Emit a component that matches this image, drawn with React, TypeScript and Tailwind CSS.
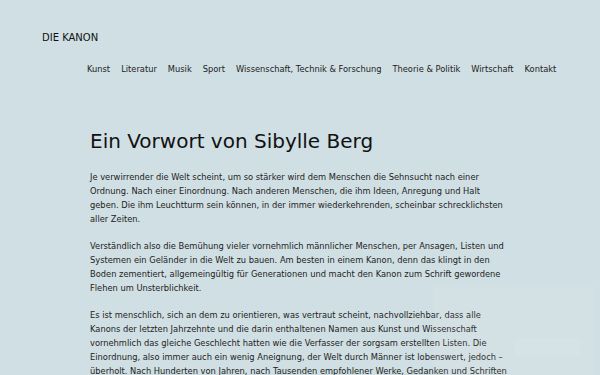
export default function App() {
  const nav = [
    "Kunst",
    "Literatur",
    "Musik",
    "Sport",
    "Wissenschaft, Technik & Forschung",
    "Theorie & Politik",
    "Wirtschaft",
    "Kontakt",
  ];

  return (
    <div className="relative h-[375px] w-[600px] overflow-hidden bg-[#d0dfe3] font-['DejaVu_Sans',sans-serif] text-[#222]">
      <header className="px-[42px] pt-[31px]">
        <div className="text-[10px] leading-[14px] text-[#111]">DIE KANON</div>
        <nav className="mt-[18px] flex gap-[11px] whitespace-nowrap pl-[45px] text-[8.3px] leading-[12px] text-[#222]">
          {nav.map((item) => (
            <a key={item} className="shrink-0">
              {item}
            </a>
          ))}
        </nav>
      </header>

      <main className="ml-[90px] mt-[54px] w-[418px]">
        <h1 className="text-[20px] leading-[24px] text-[#111]">Ein Vorwort von Sibylle Berg</h1>
        <div className="mt-[17px] space-y-[13px] text-[8.3px] leading-[14px] text-[#222]">
          <p>
            Je verwirrender die Welt scheint, um so stärker wird dem Menschen die Sehnsucht nach einer
            Ordnung. Nach einer Einordnung. Nach anderen Menschen, die ihm Ideen, Anregung und Halt
            geben. Die ihm Leuchtturm sein können, in der immer wiederkehrenden, scheinbar schrecklichsten
            aller Zeiten.
          </p>
          <p>
            Verständlich also die Bemühung vieler vornehmlich männlicher Menschen, per Ansagen, Listen und
            Systemen ein Geländer in die Welt zu bauen. Am besten in einem Kanon, denn das klingt in den
            Boden zementiert, allgemeingültig für Generationen und macht den Kanon zum Schrift gewordene
            Flehen um Unsterblichkeit.
          </p>
          <p>
            Es ist menschlich, sich an dem zu orientieren, was vertraut scheint, nachvollziehbar, dass alle
            Kanons der letzten Jahrzehnte und die darin enthaltenen Namen aus Kunst und Wissenschaft
            vornehmlich das gleiche Geschlecht hatten wie die Verfasser der sorgsam erstellten Listen. Die
            Einordnung, also immer auch ein wenig Aneignung, der Welt durch Männer ist lobenswert, jedoch –
            überholt. Nach Hunderten von Jahren, nach Tausenden empfohlener Werke, Gedanken und Schriften
          </p>
        </div>
      </main>

      <div className="absolute left-[433px] top-[285px] h-[100px] w-[160px] bg-white/[0.07]">
        <div className="absolute left-[82px] top-[53px] h-[17px] w-[65px] bg-white/[0.05]" />
      </div>
    </div>
  );
}
